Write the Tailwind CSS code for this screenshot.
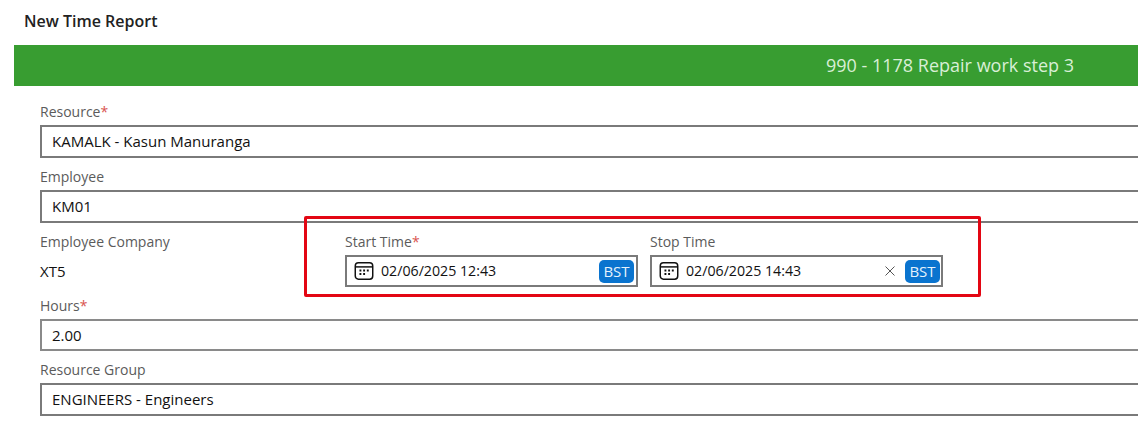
<!DOCTYPE html>
<html>
<head>
<meta charset="utf-8">
<script src="https://cdn.jsdelivr.net/npm/@tailwindcss/browser@4"></script>
</head>
<body class="bg-white overflow-hidden">
<div class="relative w-[1138px] h-[426px] overflow-hidden font-['Open_Sans','Noto_Sans',sans-serif] text-[15px] text-[#111]">
  <h1 class="pl-[24px] pt-[11px] h-[45px] text-[16px] leading-[20px] font-semibold text-[#222]">New Time Report</h1>
  <div class="ml-[14px] h-[41px] bg-[#389d31] flex items-center justify-end pr-[64px] text-[18px] text-[#d9efd6]">990 - 1178 Repair work step 3</div>

  <div class="pl-[40px] pt-[16px]">
    <div class="h-[23px] leading-[20px] text-[14px] text-[#5b5b5b]">Resource<span class="text-[#d9534f]">*</span></div>
    <div class="h-[33px] w-[1120px] border-2 border-[#7a7a7a] pl-[10px] flex items-center">KAMALK - Kasun Manuranga</div>

    <div class="mt-[9px] h-[23px] leading-[20px] text-[14px] text-[#5b5b5b]">Employee</div>
    <div class="h-[33px] w-[1120px] border-2 border-[#7a7a7a] pl-[10px] flex items-center">KM01</div>

    <div class="mt-[9px] h-[64px] flex">
      <div class="w-[305px]">
        <div class="h-[23px] leading-[20px] text-[14px] text-[#5b5b5b]">Employee Company</div>
        <div class="h-[32px] flex items-center">XT5</div>
      </div>
      <div class="w-[305px]">
        <div class="h-[23px] leading-[20px] text-[14px] text-[#5b5b5b]">Start Time<span class="text-[#d9534f]">*</span></div>
        <div class="h-[32px] w-[293px] border-2 border-[#7a7a7a] flex items-center pl-[7px] pr-[2px]">
          <svg class="w-[20px] h-[20px] mr-[7px] shrink-0" viewBox="0 0 19 19" fill="none" stroke="#111" stroke-width="1.4">
            <rect x="1.2" y="1.7" width="16.6" height="15.6" rx="3"/>
            <path d="M1.2 5.6h16.6"/>
            <path d="M5.2 9h1.8M8.7 9h1.8M12.2 9h1.8M5.2 12.4h1.8M8.7 12.4h1.8" stroke-width="1.8"/>
          </svg>
          <span class="flex-1 text-[14.2px]">02/06/2025 12:43</span>
          <span class="w-[35px] h-[23px] rounded-[5px] bg-[#0a74cf] text-[#e6f2fc] flex items-center justify-center">BST</span>
        </div>
      </div>
      <div class="w-[293px]">
        <div class="h-[23px] leading-[20px] text-[14px] text-[#5b5b5b]">Stop Time</div>
        <div class="h-[32px] w-[293px] border-2 border-[#7a7a7a] flex items-center pl-[7px] pr-[1px]">
          <svg class="w-[20px] h-[20px] mr-[7px] shrink-0" viewBox="0 0 19 19" fill="none" stroke="#111" stroke-width="1.4">
            <rect x="1.2" y="1.7" width="16.6" height="15.6" rx="3"/>
            <path d="M1.2 5.6h16.6"/>
            <path d="M5.2 9h1.8M8.7 9h1.8M12.2 9h1.8M5.2 12.4h1.8M8.7 12.4h1.8" stroke-width="1.8"/>
          </svg>
          <span class="flex-1 text-[14.2px]">02/06/2025 14:43</span>
          <svg class="w-[10px] h-[10px] mr-[10px] shrink-0" viewBox="0 0 10 10" fill="none" stroke="#555" stroke-width="1">
            <path d="M.5.5l9 9M9.5.5l-9 9"/>
          </svg>
          <span class="w-[35px] h-[23px] rounded-[5px] bg-[#0a74cf] text-[#e6f2fc] flex items-center justify-center">BST</span>
        </div>
      </div>
    </div>

    <div class="h-[23px] leading-[20px] text-[14px] text-[#5b5b5b]">Hours<span class="text-[#d9534f]">*</span></div>
    <div class="h-[32px] w-[1120px] border-2 border-[#8a8a8a] pl-[10px] flex items-center">2.00</div>

    <div class="mt-[9px] h-[23px] leading-[20px] text-[14px] text-[#5b5b5b]">Resource Group</div>
    <div class="h-[33px] w-[1120px] border-2 border-[#7a7a7a] pl-[10px] flex items-center">ENGINEERS - Engineers</div>
  </div>

  <div class="absolute left-[304px] top-[216px] w-[677px] h-[81px] border-[3px] border-[#e30613] rounded-[2px]"></div>
</div>
</body>
</html>
